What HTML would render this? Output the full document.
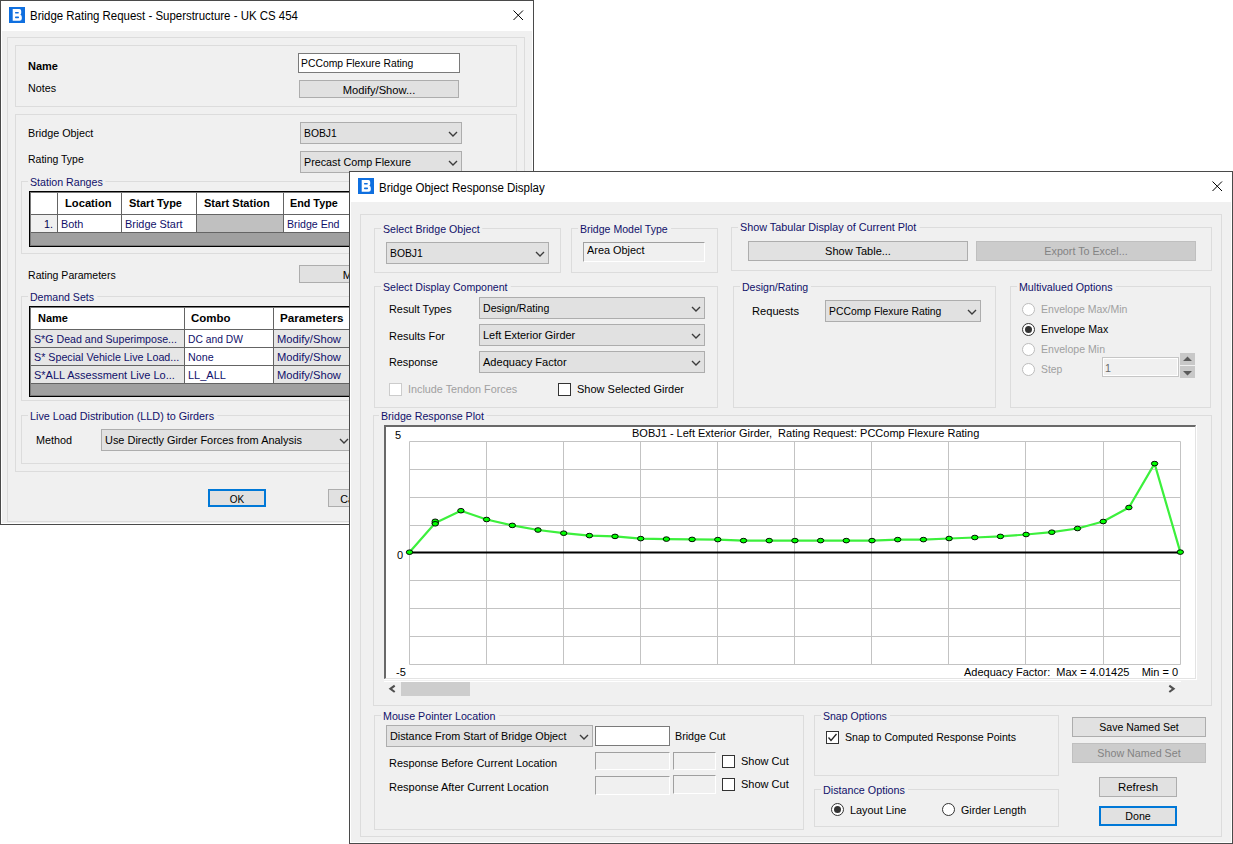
<!DOCTYPE html>
<html><head><meta charset="utf-8"><style>
html,body{margin:0;padding:0;}
body{width:1233px;height:844px;background:#fff;position:relative;overflow:hidden;font-family:"Liberation Sans",sans-serif;font-size:11px;}
.r{position:absolute;box-sizing:border-box;}
.t{position:absolute;white-space:pre;line-height:13px;font-size:11px;}
</style></head><body>
<div class="r" style="left:0px;top:0px;width:534px;height:525px;background:#fff;border:1px solid #4a4a4a;"></div>
<svg class="r" style="left:9px;top:7px" width="16" height="16" viewBox="0 0 16 16"><rect width="16" height="16" fill="#0f6fdf"/><path d="M3.7 2 H10.4 Q12.2 2 12.2 4.1 V5.9 Q12.2 7.2 11.3 7.7 Q12.8 8.2 12.8 9.9 V11.7 Q12.8 13.8 10.6 13.8 H3.7 Z" fill="#fff"/><rect x="6" y="4.9" width="3.8" height="1.5" rx="0.6" fill="#0f6fdf"/><rect x="6" y="9.4" width="4" height="1.9" rx="0.7" fill="#0f6fdf"/></svg>
<div class="t" style="left:30px;top:10px;color:#000;font-size:12px;transform:scaleX(0.954);transform-origin:1px 0;">Bridge Rating Request - Superstructure - UK CS 454</div>
<svg class="r" style="left:513px;top:10px" width="11" height="11" viewBox="0 0 11 11"><path d="M0.5 0.5 L10 10 M10 0.5 L0.5 10" stroke="#000" stroke-width="1"/></svg>
<div class="r" style="left:2px;top:31px;width:530px;height:492px;background:#f0f0f0;"></div>
<div class="r" style="left:7px;top:37px;width:518px;height:485px;border:1px solid #dcdcdc;"></div>
<div class="r" style="left:15px;top:45px;width:502px;height:62px;border:1px solid #dcdcdc;"></div>
<div class="t" style="left:28px;top:60px;color:#000;font-weight:bold;font-size:11px;">Name</div>
<div class="t" style="left:28px;top:82px;color:#000;font-size:11px;transform:scaleX(0.975);transform-origin:1px 0;">Notes</div>
<div class="r" style="left:298px;top:53px;width:162px;height:20px;background:#fff;border:1px solid #7a7a7a;"></div>
<div class="t" style="left:301px;top:57px;color:#000;font-size:11px;transform:scaleX(0.942);transform-origin:1px 0;">PCComp Flexure Rating</div>
<div class="r" style="left:299px;top:80px;width:160px;height:18px;background:#e1e1e1;border:1px solid #adadad;"></div>
<div class="t" style="left:299px;width:160px;text-align:center;top:84px;color:#000;transform:scaleX(1.014);transform-origin:50% 0;">Modify/Show...</div>
<div class="r" style="left:15px;top:114px;width:502px;height:358px;border:1px solid #dcdcdc;"></div>
<div class="t" style="left:28px;top:127px;color:#000;font-size:11px;transform:scaleX(0.98);transform-origin:1px 0;">Bridge Object</div>
<div class="r" style="left:300px;top:122px;width:162px;height:22px;background:#e1e1e1;border:1px solid #adadad;"></div>
<div class="t" style="left:304px;top:127px;color:#000;font-size:11px;transform:scaleX(0.938);transform-origin:1px 0;">BOBJ1</div>
<svg class="r" style="left:447.5px;top:130.5px" width="10" height="6" viewBox="0 0 10 6"><path d="M1 1 L5 5 L9 1" fill="none" stroke="#3c3c3c" stroke-width="1.35"/></svg>
<div class="t" style="left:28px;top:153px;color:#000;font-size:11px;transform:scaleX(0.952);transform-origin:1px 0;">Rating Type</div>
<div class="r" style="left:300px;top:151px;width:162px;height:22px;background:#e1e1e1;border:1px solid #adadad;"></div>
<div class="t" style="left:304px;top:156px;color:#000;font-size:11px;transform:scaleX(0.977);transform-origin:1px 0;">Precast Comp Flexure</div>
<svg class="r" style="left:447.5px;top:159.5px" width="10" height="6" viewBox="0 0 10 6"><path d="M1 1 L5 5 L9 1" fill="none" stroke="#3c3c3c" stroke-width="1.35"/></svg>
<div class="r" style="left:21px;top:181px;width:488px;height:73px;border:1px solid #dcdcdc;"></div>
<div class="t" style="left:30px;top:176px;color:#10106a;font-size:11px;transform:scaleX(0.967);transform-origin:1px 0;background:#f0f0f0;padding:0 3px 0 2px;margin-left:-2px;">Station Ranges</div>
<div class="r" style="left:29px;top:191px;width:492px;height:56px;background:#a0a0a0;border:1px solid #000;box-shadow:inset 0 0 0 1px #7a7a7a;"></div>
<div class="r" style="left:31px;top:193px;width:490px;height:21px;background:#fff;"></div>
<div class="r" style="left:31px;top:214px;width:490px;height:1px;background:#646464;"></div>
<div class="r" style="left:31px;top:215px;width:26px;height:17px;background:#f0f0f0;"></div>
<div class="r" style="left:58px;top:215px;width:463px;height:17px;background:#fff;"></div>
<div class="r" style="left:197px;top:215px;width:86px;height:17px;background:#c0c0c0;"></div>
<div class="r" style="left:31px;top:232px;width:490px;height:1px;background:#646464;"></div>
<div class="r" style="left:57px;top:193px;width:1px;height:39px;background:#646464;"></div>
<div class="r" style="left:121px;top:193px;width:1px;height:39px;background:#646464;"></div>
<div class="r" style="left:196px;top:193px;width:1px;height:39px;background:#646464;"></div>
<div class="r" style="left:283px;top:193px;width:1px;height:39px;background:#646464;"></div>
<div class="r" style="left:380px;top:193px;width:1px;height:39px;background:#646464;"></div>
<div class="t" style="left:65px;top:197px;color:#000;font-weight:bold;font-size:11px;transform:scaleX(1.018);transform-origin:1px 0;">Location</div>
<div class="t" style="left:129px;top:197px;color:#000;font-weight:bold;font-size:11px;">Start Type</div>
<div class="t" style="left:204px;top:197px;color:#000;font-weight:bold;font-size:11px;transform:scaleX(1.005);transform-origin:1px 0;">Start Station</div>
<div class="t" style="left:290px;top:197px;color:#000;font-weight:bold;font-size:11px;transform:scaleX(0.98);transform-origin:1px 0;">End Type</div>
<div class="t" style="left:44px;top:218px;color:#000050;font-size:11px;transform:scaleX(0.975);transform-origin:1px 0;">1.</div>
<div class="t" style="left:61px;top:218px;color:#10106a;font-size:11px;transform:scaleX(0.986);transform-origin:1px 0;">Both</div>
<div class="t" style="left:125px;top:218px;color:#10106a;font-size:11px;transform:scaleX(0.991);transform-origin:1px 0;">Bridge Start</div>
<div class="t" style="left:287px;top:218px;color:#10106a;font-size:11px;transform:scaleX(0.964);transform-origin:1px 0;">Bridge End</div>
<div class="t" style="left:28px;top:269px;color:#000;font-size:11px;transform:scaleX(0.956);transform-origin:1px 0;">Rating Parameters</div>
<div class="r" style="left:299px;top:265px;width:160px;height:18px;background:#e1e1e1;border:1px solid #adadad;"></div>
<div class="t" style="left:299px;width:160px;text-align:center;top:269px;color:#000;transform:scaleX(1.014);transform-origin:50% 0;">Modify/Show...</div>
<div class="r" style="left:21px;top:296px;width:488px;height:105px;border:1px solid #dcdcdc;"></div>
<div class="t" style="left:30px;top:291px;color:#10106a;font-size:11px;transform:scaleX(0.961);transform-origin:1px 0;background:#f0f0f0;padding:0 3px 0 2px;margin-left:-2px;">Demand Sets</div>
<div class="r" style="left:29px;top:306px;width:492px;height:91px;background:#a0a0a0;border:1px solid #000;box-shadow:inset 0 0 0 1px #7a7a7a;"></div>
<div class="r" style="left:31px;top:308px;width:490px;height:21px;background:#fff;"></div>
<div class="r" style="left:31px;top:329px;width:490px;height:1px;background:#646464;"></div>
<div class="r" style="left:31px;top:330px;width:153px;height:17px;background:#e6e6e6;"></div>
<div class="r" style="left:185px;top:330px;width:88px;height:17px;background:#fff;"></div>
<div class="r" style="left:274px;top:330px;width:247px;height:17px;background:#e6e6e6;"></div>
<div class="r" style="left:31px;top:347px;width:490px;height:1px;background:#646464;"></div>
<div class="r" style="left:31px;top:348px;width:153px;height:17px;background:#e6e6e6;"></div>
<div class="r" style="left:185px;top:348px;width:88px;height:17px;background:#fff;"></div>
<div class="r" style="left:274px;top:348px;width:247px;height:17px;background:#e6e6e6;"></div>
<div class="r" style="left:31px;top:365px;width:490px;height:1px;background:#646464;"></div>
<div class="r" style="left:31px;top:366px;width:153px;height:17px;background:#e6e6e6;"></div>
<div class="r" style="left:185px;top:366px;width:88px;height:17px;background:#fff;"></div>
<div class="r" style="left:274px;top:366px;width:247px;height:17px;background:#e6e6e6;"></div>
<div class="r" style="left:31px;top:383px;width:490px;height:1px;background:#646464;"></div>
<div class="r" style="left:184px;top:308px;width:1px;height:75px;background:#646464;"></div>
<div class="r" style="left:273px;top:308px;width:1px;height:75px;background:#646464;"></div>
<div class="t" style="left:38px;top:312px;color:#000;font-weight:bold;font-size:11px;">Name</div>
<div class="t" style="left:191px;top:312px;color:#000;font-weight:bold;font-size:11px;transform:scaleX(1.042);transform-origin:1px 0;">Combo</div>
<div class="t" style="left:280px;top:312px;color:#000;font-weight:bold;font-size:11px;transform:scaleX(1.06);transform-origin:1px 0;">Parameters</div>
<div class="t" style="left:34px;top:333px;color:#10106a;font-size:11px;transform:scaleX(0.966);transform-origin:1px 0;">S*G Dead and Superimpose...</div>
<div class="t" style="left:188px;top:333px;color:#10106a;font-size:11px;transform:scaleX(0.934);transform-origin:1px 0;">DC and DW</div>
<div class="t" style="left:277px;top:333px;color:#10106a;font-size:11px;transform:scaleX(1.015);transform-origin:1px 0;">Modify/Show</div>
<div class="t" style="left:34px;top:351px;color:#10106a;font-size:11px;transform:scaleX(0.973);transform-origin:1px 0;">S* Special Vehicle Live Load...</div>
<div class="t" style="left:188px;top:351px;color:#10106a;font-size:11px;transform:scaleX(0.972);transform-origin:1px 0;">None</div>
<div class="t" style="left:277px;top:351px;color:#10106a;font-size:11px;transform:scaleX(1.015);transform-origin:1px 0;">Modify/Show</div>
<div class="t" style="left:34px;top:369px;color:#10106a;font-size:11px;">S*ALL Assessment Live Lo...</div>
<div class="t" style="left:188px;top:369px;color:#10106a;font-size:11px;">LL_ALL</div>
<div class="t" style="left:277px;top:369px;color:#10106a;font-size:11px;transform:scaleX(1.015);transform-origin:1px 0;">Modify/Show</div>
<div class="r" style="left:21px;top:415px;width:488px;height:49px;border:1px solid #dcdcdc;"></div>
<div class="t" style="left:30px;top:410px;color:#10106a;font-size:11px;transform:scaleX(0.981);transform-origin:1px 0;background:#f0f0f0;padding:0 3px 0 2px;margin-left:-2px;">Live Load Distribution (LLD) to Girders</div>
<div class="t" style="left:36px;top:434px;color:#000;font-size:11px;transform:scaleX(0.983);transform-origin:1px 0;">Method</div>
<div class="r" style="left:101px;top:429px;width:252px;height:22px;background:#e1e1e1;border:1px solid #adadad;"></div>
<div class="t" style="left:105px;top:434px;color:#000;font-size:11px;transform:scaleX(0.994);transform-origin:1px 0;">Use Directly Girder Forces from Analysis</div>
<svg class="r" style="left:338.5px;top:437.5px" width="10" height="6" viewBox="0 0 10 6"><path d="M1 1 L5 5 L9 1" fill="none" stroke="#3c3c3c" stroke-width="1.35"/></svg>
<div class="r" style="left:208px;top:489px;width:58px;height:18px;background:#e1e1e1;border:1px solid #0078d7;border-width:2px;"></div>
<div class="t" style="left:208px;width:58px;text-align:center;top:493px;color:#000;transform:scaleX(0.906);transform-origin:50% 0;">OK</div>
<div class="r" style="left:328px;top:489px;width:58px;height:18px;background:#e1e1e1;border:1px solid #adadad;"></div>
<div class="t" style="left:328px;width:58px;text-align:center;top:493px;color:#000;transform:scaleX(0.975);transform-origin:50% 0;">Cancel</div>
<div class="r" style="left:349px;top:171px;width:884px;height:673px;background:#fff;border:1px solid #4a4a4a;"></div>
<svg class="r" style="left:358px;top:178px" width="16" height="16" viewBox="0 0 16 16"><rect width="16" height="16" fill="#0f6fdf"/><path d="M3.7 2 H10.4 Q12.2 2 12.2 4.1 V5.9 Q12.2 7.2 11.3 7.7 Q12.8 8.2 12.8 9.9 V11.7 Q12.8 13.8 10.6 13.8 H3.7 Z" fill="#fff"/><rect x="6" y="4.9" width="3.8" height="1.5" rx="0.6" fill="#0f6fdf"/><rect x="6" y="9.4" width="4" height="1.9" rx="0.7" fill="#0f6fdf"/></svg>
<div class="t" style="left:379px;top:182px;color:#000;font-size:12px;transform:scaleX(0.959);transform-origin:1px 0;">Bridge Object Response Display</div>
<svg class="r" style="left:1212px;top:181px" width="11" height="11" viewBox="0 0 11 11"><path d="M0.5 0.5 L10 10 M10 0.5 L0.5 10" stroke="#000" stroke-width="1"/></svg>
<div class="r" style="left:351px;top:202px;width:880px;height:640px;background:#f0f0f0;"></div>
<div class="r" style="left:360px;top:214px;width:862px;height:623px;border:1px solid #dcdcdc;"></div>
<div class="r" style="left:374px;top:228px;width:187px;height:45px;border:1px solid #dcdcdc;"></div>
<div class="t" style="left:383px;top:223px;color:#10106a;font-size:11px;transform:scaleX(0.964);transform-origin:1px 0;background:#f0f0f0;padding:0 3px 0 2px;margin-left:-2px;">Select Bridge Object</div>
<div class="r" style="left:386px;top:242px;width:163px;height:22px;background:#e1e1e1;border:1px solid #adadad;"></div>
<div class="t" style="left:390px;top:247px;color:#000;font-size:11px;transform:scaleX(0.938);transform-origin:1px 0;">BOBJ1</div>
<svg class="r" style="left:534.5px;top:250.5px" width="10" height="6" viewBox="0 0 10 6"><path d="M1 1 L5 5 L9 1" fill="none" stroke="#3c3c3c" stroke-width="1.35"/></svg>
<div class="r" style="left:571px;top:228px;width:147px;height:45px;border:1px solid #dcdcdc;"></div>
<div class="t" style="left:580px;top:223px;color:#10106a;font-size:11px;transform:scaleX(0.959);transform-origin:1px 0;background:#f0f0f0;padding:0 3px 0 2px;margin-left:-2px;">Bridge Model Type</div>
<div class="r" style="left:583px;top:242px;width:122px;height:20px;background:#f0f0f0;border-top:1px solid #a0a0a0;border-left:1px solid #a0a0a0;border-right:1px solid #fff;border-bottom:1px solid #fff;"></div>
<div class="t" style="left:587px;top:244px;color:#000;font-size:11px;transform:scaleX(0.988);transform-origin:1px 0;">Area Object</div>
<div class="r" style="left:731px;top:227px;width:481px;height:44px;border:1px solid #dcdcdc;"></div>
<div class="t" style="left:740px;top:221px;color:#10106a;font-size:11px;transform:scaleX(0.982);transform-origin:1px 0;background:#f0f0f0;padding:0 3px 0 2px;margin-left:-2px;">Show Tabular Display of Current Plot</div>
<div class="r" style="left:748px;top:241px;width:220px;height:20px;background:#e1e1e1;border:1px solid #adadad;"></div>
<div class="t" style="left:748px;width:220px;text-align:center;top:245px;color:#000;">Show Table...</div>
<div class="r" style="left:976px;top:241px;width:220px;height:20px;background:#cccccc;border:1px solid #bfbfbf;"></div>
<div class="t" style="left:976px;width:220px;text-align:center;top:245px;color:#838383;transform:scaleX(0.975);transform-origin:50% 0;">Export To Excel...</div>
<div class="r" style="left:374px;top:286px;width:344px;height:122px;border:1px solid #dcdcdc;"></div>
<div class="t" style="left:383px;top:281px;color:#10106a;font-size:11px;transform:scaleX(0.961);transform-origin:1px 0;background:#f0f0f0;padding:0 3px 0 2px;margin-left:-2px;">Select Display Component</div>
<div class="t" style="left:389px;top:303px;color:#000;font-size:11px;transform:scaleX(0.987);transform-origin:1px 0;">Result Types</div>
<div class="t" style="left:389px;top:330px;color:#000;font-size:11px;transform:scaleX(0.993);transform-origin:1px 0;">Results For</div>
<div class="t" style="left:389px;top:356px;color:#000;font-size:11px;transform:scaleX(0.982);transform-origin:1px 0;">Response</div>
<div class="r" style="left:479px;top:297px;width:226px;height:22px;background:#e1e1e1;border:1px solid #adadad;"></div>
<div class="t" style="left:483px;top:302px;color:#000;font-size:11px;transform:scaleX(0.959);transform-origin:1px 0;">Design/Rating</div>
<svg class="r" style="left:690.5px;top:305.5px" width="10" height="6" viewBox="0 0 10 6"><path d="M1 1 L5 5 L9 1" fill="none" stroke="#3c3c3c" stroke-width="1.35"/></svg>
<div class="r" style="left:479px;top:324px;width:226px;height:22px;background:#e1e1e1;border:1px solid #adadad;"></div>
<div class="t" style="left:483px;top:329px;color:#000;font-size:11px;transform:scaleX(0.992);transform-origin:1px 0;">Left Exterior Girder</div>
<svg class="r" style="left:690.5px;top:332.5px" width="10" height="6" viewBox="0 0 10 6"><path d="M1 1 L5 5 L9 1" fill="none" stroke="#3c3c3c" stroke-width="1.35"/></svg>
<div class="r" style="left:479px;top:351px;width:226px;height:22px;background:#e1e1e1;border:1px solid #adadad;"></div>
<div class="t" style="left:483px;top:356px;color:#000;font-size:11px;transform:scaleX(1.005);transform-origin:1px 0;">Adequacy Factor</div>
<svg class="r" style="left:690.5px;top:359.5px" width="10" height="6" viewBox="0 0 10 6"><path d="M1 1 L5 5 L9 1" fill="none" stroke="#3c3c3c" stroke-width="1.35"/></svg>
<div class="r" style="left:389px;top:383px;width:13px;height:13px;background:#fff;border:1px solid #cccccc;"></div>
<div class="t" style="left:408px;top:383px;color:#a0a0a0;font-size:11px;transform:scaleX(0.982);transform-origin:1px 0;">Include Tendon Forces</div>
<div class="r" style="left:558px;top:383px;width:13px;height:13px;background:#fff;border:1px solid #333333;"></div>
<div class="t" style="left:577px;top:383px;color:#000;font-size:11px;">Show Selected Girder</div>
<div class="r" style="left:733px;top:286px;width:263px;height:122px;border:1px solid #dcdcdc;"></div>
<div class="t" style="left:742px;top:281px;color:#10106a;font-size:11px;transform:scaleX(0.959);transform-origin:1px 0;background:#f0f0f0;padding:0 3px 0 2px;margin-left:-2px;">Design/Rating</div>
<div class="t" style="left:752px;top:305px;color:#000;font-size:11px;transform:scaleX(1.011);transform-origin:1px 0;">Requests</div>
<div class="r" style="left:825px;top:300px;width:156px;height:22px;background:#e1e1e1;border:1px solid #adadad;"></div>
<div class="t" style="left:829px;top:305px;color:#000;font-size:11px;transform:scaleX(0.942);transform-origin:1px 0;">PCComp Flexure Rating</div>
<svg class="r" style="left:966.5px;top:308.5px" width="10" height="6" viewBox="0 0 10 6"><path d="M1 1 L5 5 L9 1" fill="none" stroke="#3c3c3c" stroke-width="1.35"/></svg>
<div class="r" style="left:1010px;top:286px;width:201px;height:122px;border:1px solid #dcdcdc;"></div>
<div class="t" style="left:1019px;top:281px;color:#10106a;font-size:11px;transform:scaleX(0.968);transform-origin:1px 0;background:#f0f0f0;padding:0 3px 0 2px;margin-left:-2px;">Multivalued Options</div>
<svg class="r" style="left:1022.0px;top:302.5px" width="13" height="13" viewBox="0 0 13 13"><circle cx="6.5" cy="6.5" r="6" fill="#fff" stroke="#bcbcbc" stroke-width="1"/></svg>
<div class="t" style="left:1041px;top:303px;color:#a0a0a0;font-size:11px;transform:scaleX(0.955);transform-origin:1px 0;">Envelope Max/Min</div>
<svg class="r" style="left:1022.0px;top:322.5px" width="13" height="13" viewBox="0 0 13 13"><circle cx="6.5" cy="6.5" r="6" fill="#fff" stroke="#333333" stroke-width="1"/><circle cx="6.5" cy="6.5" r="3.5" fill="#333"/></svg>
<div class="t" style="left:1041px;top:323px;color:#000;font-size:11px;transform:scaleX(0.964);transform-origin:1px 0;">Envelope Max</div>
<svg class="r" style="left:1022.0px;top:342.5px" width="13" height="13" viewBox="0 0 13 13"><circle cx="6.5" cy="6.5" r="6" fill="#fff" stroke="#bcbcbc" stroke-width="1"/></svg>
<div class="t" style="left:1041px;top:343px;color:#a0a0a0;font-size:11px;transform:scaleX(0.96);transform-origin:1px 0;">Envelope Min</div>
<svg class="r" style="left:1022.0px;top:362.5px" width="13" height="13" viewBox="0 0 13 13"><circle cx="6.5" cy="6.5" r="6" fill="#fff" stroke="#bcbcbc" stroke-width="1"/></svg>
<div class="t" style="left:1041px;top:363px;color:#a0a0a0;font-size:11px;transform:scaleX(0.939);transform-origin:1px 0;">Step</div>
<div class="r" style="left:1102px;top:357px;width:77px;height:20px;background:#f0f0f0;border:1px solid #c6c6c6;box-shadow:inset 0 0 0 1px #fff;"></div>
<div class="t" style="left:1105px;top:362px;color:#6a6a6a;font-size:11px;transform:scaleX(0.975);transform-origin:1px 0;">1</div>
<div class="r" style="left:1180px;top:353px;width:15px;height:12px;background:#c8c8c8;"></div>
<div class="r" style="left:1180px;top:366px;width:15px;height:12px;background:#c8c8c8;"></div>
<svg class="r" style="left:1180px;top:353px" width="15" height="25" viewBox="0 0 15 25"><path d="M3 8 L7.5 3.5 L12 8 Z M3 18 L12 18 L7.5 22.5 Z" fill="#5a5a5a"/></svg>
<div class="r" style="left:373px;top:415px;width:839px;height:291px;border:1px solid #dcdcdc;"></div>
<div class="t" style="left:381px;top:410px;color:#10106a;font-size:11px;transform:scaleX(0.968);transform-origin:1px 0;background:#f0f0f0;padding:0 3px 0 2px;margin-left:-2px;">Bridge Response Plot</div>
<div class="r" style="left:384px;top:425px;width:812px;height:254px;background:#fff;border-top:2px solid #696969;border-left:2px solid #696969;border-right:1px solid #e3e3e3;border-bottom:1px solid #e3e3e3;"></div>
<div class="r" style="left:384px;top:679px;width:813px;height:1px;background:#fff;"></div>
<div class="r" style="left:1196px;top:425px;width:1px;height:255px;background:#fff;"></div>
<div class="r" style="left:384px;top:681px;width:797px;height:1px;background:#fff;"></div>
<svg class="r" style="left:0;top:0" width="1233" height="844" viewBox="0 0 1233 844"><line x1="409.5" y1="441.5" x2="409.5" y2="664.5" stroke="#c3c3c3" stroke-width="1"/><line x1="486.5" y1="441.5" x2="486.5" y2="664.5" stroke="#c3c3c3" stroke-width="1"/><line x1="563.5" y1="441.5" x2="563.5" y2="664.5" stroke="#c3c3c3" stroke-width="1"/><line x1="640.5" y1="441.5" x2="640.5" y2="664.5" stroke="#c3c3c3" stroke-width="1"/><line x1="717.5" y1="441.5" x2="717.5" y2="664.5" stroke="#c3c3c3" stroke-width="1"/><line x1="794.5" y1="441.5" x2="794.5" y2="664.5" stroke="#c3c3c3" stroke-width="1"/><line x1="871.5" y1="441.5" x2="871.5" y2="664.5" stroke="#c3c3c3" stroke-width="1"/><line x1="948.5" y1="441.5" x2="948.5" y2="664.5" stroke="#c3c3c3" stroke-width="1"/><line x1="1025.5" y1="441.5" x2="1025.5" y2="664.5" stroke="#c3c3c3" stroke-width="1"/><line x1="1103.5" y1="441.5" x2="1103.5" y2="664.5" stroke="#c3c3c3" stroke-width="1"/><line x1="1180.5" y1="441.5" x2="1180.5" y2="664.5" stroke="#c3c3c3" stroke-width="1"/><line x1="409.5" y1="441.5" x2="1180.5" y2="441.5" stroke="#c3c3c3" stroke-width="1"/><line x1="409.5" y1="469.5" x2="1180.5" y2="469.5" stroke="#c3c3c3" stroke-width="1"/><line x1="409.5" y1="497.5" x2="1180.5" y2="497.5" stroke="#c3c3c3" stroke-width="1"/><line x1="409.5" y1="525.5" x2="1180.5" y2="525.5" stroke="#c3c3c3" stroke-width="1"/><line x1="409.5" y1="580.5" x2="1180.5" y2="580.5" stroke="#c3c3c3" stroke-width="1"/><line x1="409.5" y1="608.5" x2="1180.5" y2="608.5" stroke="#c3c3c3" stroke-width="1"/><line x1="409.5" y1="636.5" x2="1180.5" y2="636.5" stroke="#c3c3c3" stroke-width="1"/><line x1="409.5" y1="664.5" x2="1180.5" y2="664.5" stroke="#c3c3c3" stroke-width="1"/><line x1="409.5" y1="552.5" x2="1180.5" y2="552.5" stroke="#000" stroke-width="2"/><path d="M409.5 552.2 L435.2 522.9 L460.9 510.7 L486.6 519.5 L512.3 525.4 L538.0 530.0 L563.7 533.2 L589.4 535.6 L615.0 536.4 L640.7 538.6 L666.4 539.1 L692.1 539.4 L717.8 539.6 L743.5 540.6 L769.2 540.6 L794.9 540.6 L820.6 540.6 L846.3 540.6 L872.0 540.6 L897.7 539.6 L923.4 539.6 L949.1 538.5 L974.8 537.5 L1000.4 536.4 L1026.1 534.5 L1051.8 532.2 L1077.5 528.5 L1103.2 521.5 L1128.9 507.5 L1154.6 463.6 L1180.3 552.1" fill="none" stroke="#3cf03c" stroke-width="2.2" stroke-linejoin="round"/><ellipse cx="409.5" cy="552.2" rx="3.2" ry="2.3" fill="#00ff00" stroke="#000" stroke-width="0.95"/><ellipse cx="435.2" cy="522.9" rx="3.2" ry="2.3" fill="#00ff00" stroke="#000" stroke-width="0.95"/><ellipse cx="460.9" cy="510.7" rx="3.2" ry="2.3" fill="#00ff00" stroke="#000" stroke-width="0.95"/><ellipse cx="486.6" cy="519.5" rx="3.2" ry="2.3" fill="#00ff00" stroke="#000" stroke-width="0.95"/><ellipse cx="512.3" cy="525.4" rx="3.2" ry="2.3" fill="#00ff00" stroke="#000" stroke-width="0.95"/><ellipse cx="538.0" cy="530.0" rx="3.2" ry="2.3" fill="#00ff00" stroke="#000" stroke-width="0.95"/><ellipse cx="563.7" cy="533.2" rx="3.2" ry="2.3" fill="#00ff00" stroke="#000" stroke-width="0.95"/><ellipse cx="589.4" cy="535.6" rx="3.2" ry="2.3" fill="#00ff00" stroke="#000" stroke-width="0.95"/><ellipse cx="615.0" cy="536.4" rx="3.2" ry="2.3" fill="#00ff00" stroke="#000" stroke-width="0.95"/><ellipse cx="640.7" cy="538.6" rx="3.2" ry="2.3" fill="#00ff00" stroke="#000" stroke-width="0.95"/><ellipse cx="666.4" cy="539.1" rx="3.2" ry="2.3" fill="#00ff00" stroke="#000" stroke-width="0.95"/><ellipse cx="692.1" cy="539.4" rx="3.2" ry="2.3" fill="#00ff00" stroke="#000" stroke-width="0.95"/><ellipse cx="717.8" cy="539.6" rx="3.2" ry="2.3" fill="#00ff00" stroke="#000" stroke-width="0.95"/><ellipse cx="743.5" cy="540.6" rx="3.2" ry="2.3" fill="#00ff00" stroke="#000" stroke-width="0.95"/><ellipse cx="769.2" cy="540.6" rx="3.2" ry="2.3" fill="#00ff00" stroke="#000" stroke-width="0.95"/><ellipse cx="794.9" cy="540.6" rx="3.2" ry="2.3" fill="#00ff00" stroke="#000" stroke-width="0.95"/><ellipse cx="820.6" cy="540.6" rx="3.2" ry="2.3" fill="#00ff00" stroke="#000" stroke-width="0.95"/><ellipse cx="846.3" cy="540.6" rx="3.2" ry="2.3" fill="#00ff00" stroke="#000" stroke-width="0.95"/><ellipse cx="872.0" cy="540.6" rx="3.2" ry="2.3" fill="#00ff00" stroke="#000" stroke-width="0.95"/><ellipse cx="897.7" cy="539.6" rx="3.2" ry="2.3" fill="#00ff00" stroke="#000" stroke-width="0.95"/><ellipse cx="923.4" cy="539.6" rx="3.2" ry="2.3" fill="#00ff00" stroke="#000" stroke-width="0.95"/><ellipse cx="949.1" cy="538.5" rx="3.2" ry="2.3" fill="#00ff00" stroke="#000" stroke-width="0.95"/><ellipse cx="974.8" cy="537.5" rx="3.2" ry="2.3" fill="#00ff00" stroke="#000" stroke-width="0.95"/><ellipse cx="1000.4" cy="536.4" rx="3.2" ry="2.3" fill="#00ff00" stroke="#000" stroke-width="0.95"/><ellipse cx="1026.1" cy="534.5" rx="3.2" ry="2.3" fill="#00ff00" stroke="#000" stroke-width="0.95"/><ellipse cx="1051.8" cy="532.2" rx="3.2" ry="2.3" fill="#00ff00" stroke="#000" stroke-width="0.95"/><ellipse cx="1077.5" cy="528.5" rx="3.2" ry="2.3" fill="#00ff00" stroke="#000" stroke-width="0.95"/><ellipse cx="1103.2" cy="521.5" rx="3.2" ry="2.3" fill="#00ff00" stroke="#000" stroke-width="0.95"/><ellipse cx="1128.9" cy="507.5" rx="3.2" ry="2.3" fill="#00ff00" stroke="#000" stroke-width="0.95"/><ellipse cx="1154.6" cy="463.6" rx="3.2" ry="2.3" fill="#00ff00" stroke="#000" stroke-width="0.95"/><ellipse cx="1180.3" cy="552.1" rx="3.2" ry="2.3" fill="#00ff00" stroke="#000" stroke-width="0.95"/><ellipse cx="435.2" cy="521.3" rx="3.2" ry="2.3" fill="#00ff00" stroke="#000" stroke-width="0.95"/><ellipse cx="435.2" cy="523.8" rx="3.2" ry="2.3" fill="#00ff00" stroke="#000" stroke-width="0.95"/></svg>
<div class="t" style="left:395px;top:429px;color:#000;font-size:11px;">5</div>
<div class="t" style="left:397px;top:549px;color:#000;font-size:11px;">0</div>
<div class="t" style="left:396px;top:666px;color:#000;font-size:11px;">-5</div>
<div class="t" style="left:632px;top:427px;color:#000;font-size:11px;">BOBJ1 - Left Exterior Girder,&nbsp; Rating Request: PCComp Flexure Rating</div>
<div class="t" style="left:964px;top:666px;color:#000;font-size:11px;">Adequacy Factor:&nbsp; Max = 4.01425 &nbsp;&nbsp; Min = 0</div>
<div class="r" style="left:401px;top:682px;width:69px;height:14px;background:#cdcdcd;"></div>
<svg class="r" style="left:386px;top:682px" width="12" height="14" viewBox="0 0 12 14"><path d="M8.7 3.6 L4.4 6.8 L8.7 10" fill="none" stroke="#505050" stroke-width="2.1"/></svg>
<svg class="r" style="left:1166px;top:682px" width="12" height="14" viewBox="0 0 12 14"><path d="M3.3 3.6 L7.6 6.8 L3.3 10" fill="none" stroke="#505050" stroke-width="2.1"/></svg>
<div class="r" style="left:374px;top:715px;width:430px;height:115px;border:1px solid #dcdcdc;"></div>
<div class="t" style="left:383px;top:710px;color:#10106a;font-size:11px;transform:scaleX(0.973);transform-origin:1px 0;background:#f0f0f0;padding:0 3px 0 2px;margin-left:-2px;">Mouse Pointer Location</div>
<div class="r" style="left:386px;top:725px;width:207px;height:22px;background:#e1e1e1;border:1px solid #adadad;"></div>
<div class="t" style="left:390px;top:730px;color:#000;font-size:11px;transform:scaleX(0.982);transform-origin:1px 0;">Distance From Start of Bridge Object</div>
<svg class="r" style="left:578.5px;top:733.5px" width="10" height="6" viewBox="0 0 10 6"><path d="M1 1 L5 5 L9 1" fill="none" stroke="#3c3c3c" stroke-width="1.35"/></svg>
<div class="r" style="left:595px;top:726px;width:75px;height:20px;background:#fff;border:1px solid #7a7a7a;"></div>
<div class="t" style="left:675px;top:730px;color:#000;font-size:11px;transform:scaleX(0.973);transform-origin:1px 0;">Bridge Cut</div>
<div class="t" style="left:389px;top:757px;color:#000;font-size:11px;transform:scaleX(0.993);transform-origin:1px 0;">Response Before Current Location</div>
<div class="t" style="left:389px;top:781px;color:#000;font-size:11px;">Response After Current Location</div>
<div class="r" style="left:595px;top:752px;width:75px;height:18px;background:#f0f0f0;border-top:1px solid #a0a0a0;border-left:1px solid #a0a0a0;border-right:1px solid #fff;border-bottom:1px solid #fff;"></div>
<div class="r" style="left:673px;top:752px;width:43px;height:18px;background:#f0f0f0;border-top:1px solid #a0a0a0;border-left:1px solid #a0a0a0;border-right:1px solid #fff;border-bottom:1px solid #fff;"></div>
<div class="r" style="left:595px;top:776px;width:75px;height:19px;background:#f0f0f0;border-top:1px solid #a0a0a0;border-left:1px solid #a0a0a0;border-right:1px solid #fff;border-bottom:1px solid #fff;"></div>
<div class="r" style="left:673px;top:775px;width:43px;height:19px;background:#f0f0f0;border-top:1px solid #a0a0a0;border-left:1px solid #a0a0a0;border-right:1px solid #fff;border-bottom:1px solid #fff;"></div>
<div class="r" style="left:722px;top:755px;width:13px;height:13px;background:#fff;border:1px solid #333333;"></div>
<div class="r" style="left:722px;top:778px;width:13px;height:13px;background:#fff;border:1px solid #333333;"></div>
<div class="t" style="left:741px;top:755px;color:#000;font-size:11px;">Show Cut</div>
<div class="t" style="left:741px;top:778px;color:#000;font-size:11px;">Show Cut</div>
<div class="r" style="left:814px;top:715px;width:245px;height:61px;border:1px solid #dcdcdc;"></div>
<div class="t" style="left:823px;top:710px;color:#10106a;font-size:11px;transform:scaleX(0.958);transform-origin:1px 0;background:#f0f0f0;padding:0 3px 0 2px;margin-left:-2px;">Snap Options</div>
<div class="r" style="left:826px;top:731px;width:13px;height:13px;background:#fff;border:1px solid #333333;"></div>
<svg class="r" style="left:826px;top:731px" width="13" height="13" viewBox="0 0 13 13"><path d="M2.5 6.5 L5 9.5 L10.5 3" fill="none" stroke="#222" stroke-width="1.3"/></svg>
<div class="t" style="left:845px;top:731px;color:#000;font-size:11px;transform:scaleX(0.961);transform-origin:1px 0;">Snap to Computed Response Points</div>
<div class="r" style="left:814px;top:789px;width:245px;height:38px;border:1px solid #dcdcdc;"></div>
<div class="t" style="left:823px;top:784px;color:#10106a;font-size:11px;transform:scaleX(0.978);transform-origin:1px 0;background:#f0f0f0;padding:0 3px 0 2px;margin-left:-2px;">Distance Options</div>
<svg class="r" style="left:831.0px;top:803.0px" width="13" height="13" viewBox="0 0 13 13"><circle cx="6.5" cy="6.5" r="6" fill="#fff" stroke="#333333" stroke-width="1"/><circle cx="6.5" cy="6.5" r="3.5" fill="#333"/></svg>
<div class="t" style="left:850px;top:804px;color:#000;font-size:11px;transform:scaleX(0.989);transform-origin:1px 0;">Layout Line</div>
<svg class="r" style="left:942.0px;top:803.0px" width="13" height="13" viewBox="0 0 13 13"><circle cx="6.5" cy="6.5" r="6" fill="#fff" stroke="#333333" stroke-width="1"/></svg>
<div class="t" style="left:961px;top:804px;color:#000;font-size:11px;transform:scaleX(0.967);transform-origin:1px 0;">Girder Length</div>
<div class="r" style="left:1072px;top:717px;width:134px;height:20px;background:#e1e1e1;border:1px solid #adadad;"></div>
<div class="t" style="left:1072px;width:134px;text-align:center;top:721px;color:#000;transform:scaleX(0.955);transform-origin:50% 0;">Save Named Set</div>
<div class="r" style="left:1072px;top:743px;width:134px;height:20px;background:#cccccc;border:1px solid #bfbfbf;"></div>
<div class="t" style="left:1072px;width:134px;text-align:center;top:747px;color:#838383;transform:scaleX(0.973);transform-origin:50% 0;">Show Named Set</div>
<div class="r" style="left:1099px;top:777px;width:78px;height:20px;background:#e1e1e1;border:1px solid #adadad;"></div>
<div class="t" style="left:1099px;width:78px;text-align:center;top:781px;color:#000;transform:scaleX(1.038);transform-origin:50% 0;">Refresh</div>
<div class="r" style="left:1099px;top:806px;width:78px;height:20px;background:#e1e1e1;border:1px solid #0078d7;border-width:2px;"></div>
<div class="t" style="left:1099px;width:78px;text-align:center;top:810px;color:#000;transform:scaleX(0.968);transform-origin:50% 0;">Done</div>
</body></html>
